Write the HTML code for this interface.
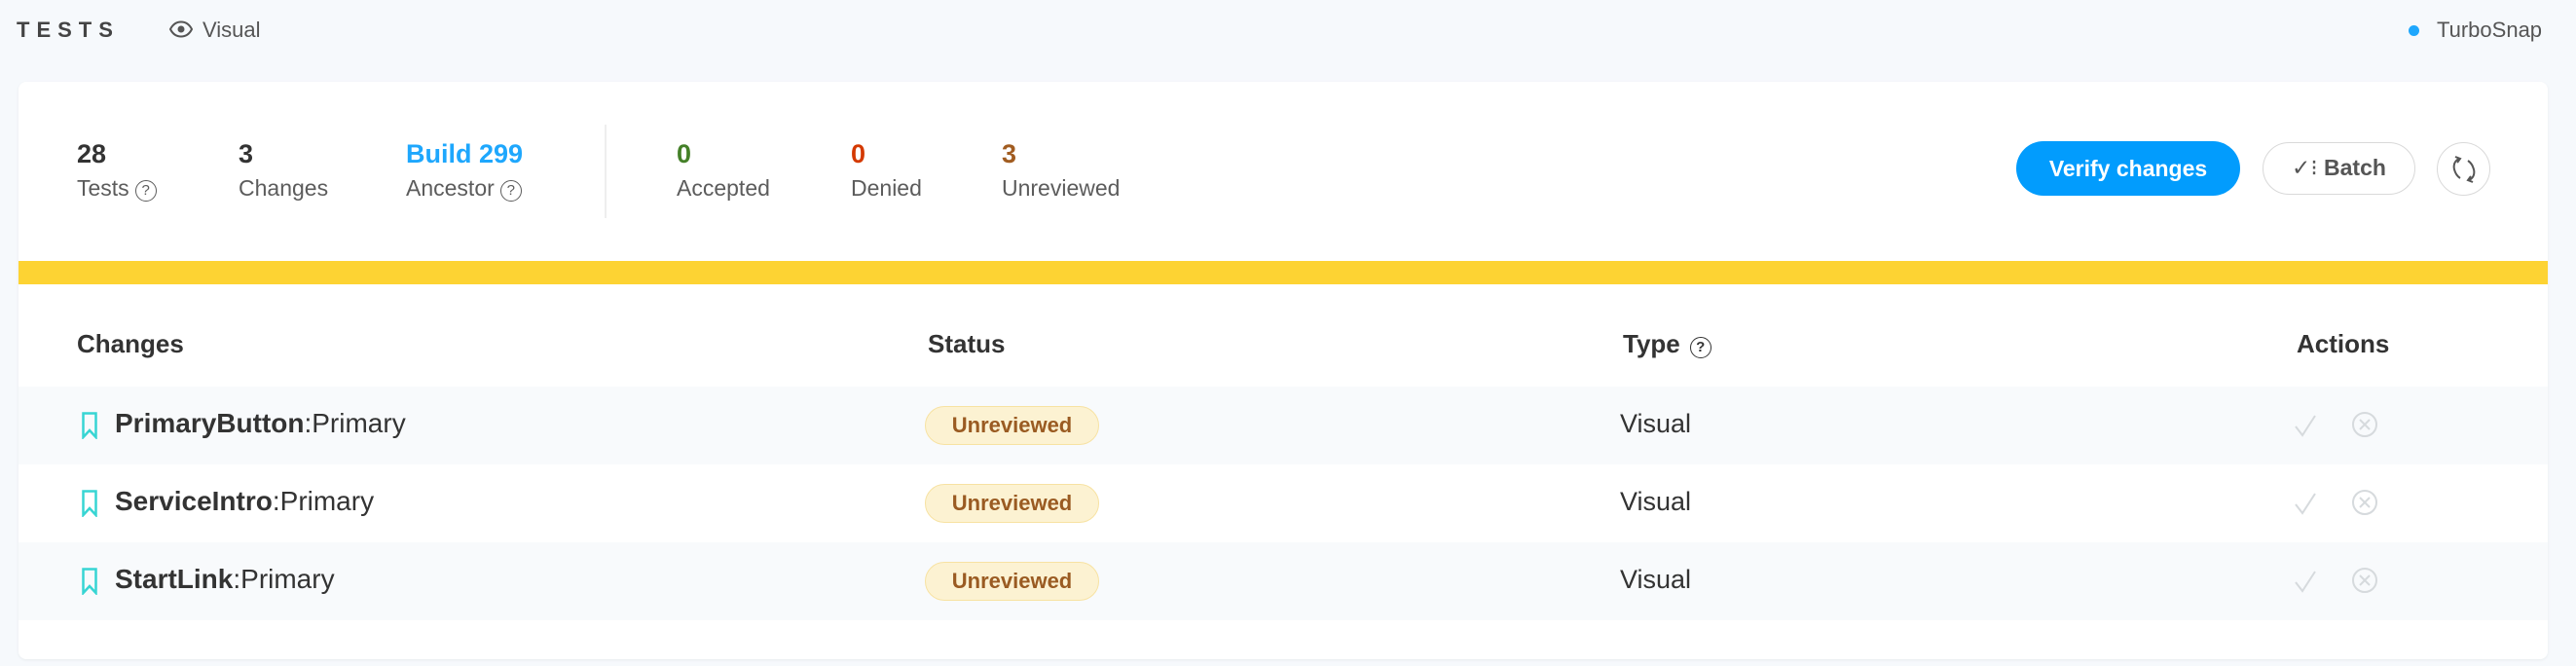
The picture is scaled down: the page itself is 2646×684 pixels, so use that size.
<!DOCTYPE html>
<html><head><meta charset="utf-8"><style>
*{box-sizing:border-box;margin:0;padding:0}
body{width:2646px;height:684px;background:#f6f9fc;font-family:"Liberation Sans",sans-serif;color:#333;position:relative;overflow:hidden}
.a{position:absolute;white-space:nowrap}
.card{position:absolute;left:19px;top:84px;width:2598px;height:593px;background:#fff;border-radius:8px;box-shadow:0 1px 3px rgba(0,0,0,.06)}
.num{font-size:27px;font-weight:bold;top:143px}
.lbl{font-size:23px;color:#5c5c5c;top:180px}
.q{display:inline-block;width:22px;height:22px;border:1.6px solid #5c5c5c;border-radius:50%;font-size:15px;text-align:center;line-height:19px;vertical-align:1px;margin-left:6px;color:#5c5c5c}
.th{font-size:26px;font-weight:bold;color:#333;top:338px}
.row{position:absolute;left:19px;width:2598px;height:80px}
.name{font-size:28px;left:118px}
.name b{font-weight:bold}
.badge{position:absolute;left:950px;width:179px;height:40px;border-radius:20px;background:#fcf2d2;border:1.5px solid #f7e2a2;color:#9a5b22;font-weight:bold;font-size:22px;text-align:center;line-height:37px}
.vis{font-size:27px;left:1664px}
</style></head><body>
<div class="a" style="left:17px;top:18px;font-size:22px;font-weight:bold;letter-spacing:7px;color:#444">TESTS</div>
<svg class="a" style="left:174px;top:21px" width="24" height="18" viewBox="0 0 24 18"><path d="M1 9C4 3 8 1.5 12 1.5S20 3 23 9C20 15 16 16.5 12 16.5S4 15 1 9Z" fill="none" stroke="#555" stroke-width="2"/><circle cx="12" cy="9" r="3.5" fill="#555"/></svg>
<div class="a" style="left:208px;top:18px;font-size:22px;color:#555">Visual</div>
<div class="a" style="left:2474px;top:26px;width:11px;height:11px;border-radius:50%;background:#1ea7fd"></div>
<div class="a" style="left:2503px;top:18px;font-size:22px;color:#555">TurboSnap</div>

<div class="card"></div>
<div class="a num" style="left:79px">28</div><div class="a lbl" style="left:79px">Tests<span class="q">?</span></div>
<div class="a num" style="left:245px">3</div><div class="a lbl" style="left:245px">Changes</div>
<div class="a num" style="left:417px;color:#1ea7fd">Build 299</div><div class="a lbl" style="left:417px">Ancestor<span class="q">?</span></div>
<div class="a" style="left:621px;top:128px;width:2px;height:96px;background:#eee"></div>
<div class="a num" style="left:695px;color:#448028">0</div><div class="a lbl" style="left:695px">Accepted</div>
<div class="a num" style="left:874px;color:#d43900">0</div><div class="a lbl" style="left:874px">Denied</div>
<div class="a num" style="left:1029px;color:#a15c20">3</div><div class="a lbl" style="left:1029px">Unreviewed</div>

<div class="a" style="left:2071px;top:145px;width:230px;height:56px;border-radius:28px;background:#029cfd;color:#fff;font-weight:bold;font-size:23px;text-align:center;line-height:56px">Verify changes</div>
<div class="a" style="left:2324px;top:146px;width:157px;height:54px;border-radius:27px;border:1.5px solid #d9d9d9;color:#555;font-weight:bold;font-size:23px;text-align:center;line-height:51px"><span style="font-weight:normal">✓⁝</span> Batch</div>
<div class="a" style="left:2503px;top:146px;width:55px;height:55px;border-radius:50%;border:1.5px solid #d9d9d9"></div>
<svg class="a" style="left:2517px;top:159px" width="28" height="30" viewBox="0 0 28 30"><path d="M9 4C4 6 3 11 4 15S7 22 10 24M19 26C24 24 25 19 24 15S21 8 18 6" fill="none" stroke="#555" stroke-width="2"/><path d="M5 2L10 4L7 8M23 28L18 26L21 22" fill="none" stroke="#555" stroke-width="2"/></svg>

<div class="a" style="left:19px;top:268px;width:2598px;height:24px;background:#fdd333"></div>

<div class="a th" style="left:79px">Changes</div>
<div class="a th" style="left:953px">Status</div>
<div class="a th" style="left:1667px">Type<span class="q" style="color:#333;border-color:#333;margin-left:10px">?</span></div>
<div class="a th" style="left:2359px">Actions</div>

<div class="row" style="top:397px;background:#f8fafc"></div>
<div class="row" style="top:557px;background:#f8fafc"></div>

<svg class="a" style="left:84px;top:423px" width="16" height="28" viewBox="0 0 16 28"><path d="M1.5 1.5H14.5V26L8 19L1.5 26Z" fill="none" stroke="#37d5d3" stroke-width="2.5"/></svg>
<svg class="a" style="left:84px;top:503px" width="16" height="28" viewBox="0 0 16 28"><path d="M1.5 1.5H14.5V26L8 19L1.5 26Z" fill="none" stroke="#37d5d3" stroke-width="2.5"/></svg>
<svg class="a" style="left:84px;top:583px" width="16" height="28" viewBox="0 0 16 28"><path d="M1.5 1.5H14.5V26L8 19L1.5 26Z" fill="none" stroke="#37d5d3" stroke-width="2.5"/></svg>

<div class="a name" style="top:419px"><b>PrimaryButton</b>:Primary</div>
<div class="a name" style="top:499px"><b>ServiceIntro</b>:Primary</div>
<div class="a name" style="top:579px"><b>StartLink</b>:Primary</div>

<div class="badge" style="top:417px">Unreviewed</div>
<div class="badge" style="top:497px">Unreviewed</div>
<div class="badge" style="top:577px">Unreviewed</div>

<div class="a vis" style="top:420px">Visual</div>
<div class="a vis" style="top:500px">Visual</div>
<div class="a vis" style="top:580px">Visual</div>

<svg class="a" style="left:2356px;top:422px" width="90" height="30" viewBox="0 0 90 30"><path d="M2 16L9 25L22 5" fill="none" stroke="#d6dadd" stroke-width="2"/><circle cx="73" cy="14" r="12" fill="none" stroke="#d6dadd" stroke-width="2"/><path d="M68 9L78 19M78 9L68 19" stroke="#d6dadd" stroke-width="2"/></svg>
<svg class="a" style="left:2356px;top:502px" width="90" height="30" viewBox="0 0 90 30"><path d="M2 16L9 25L22 5" fill="none" stroke="#d6dadd" stroke-width="2"/><circle cx="73" cy="14" r="12" fill="none" stroke="#d6dadd" stroke-width="2"/><path d="M68 9L78 19M78 9L68 19" stroke="#d6dadd" stroke-width="2"/></svg>
<svg class="a" style="left:2356px;top:582px" width="90" height="30" viewBox="0 0 90 30"><path d="M2 16L9 25L22 5" fill="none" stroke="#d6dadd" stroke-width="2"/><circle cx="73" cy="14" r="12" fill="none" stroke="#d6dadd" stroke-width="2"/><path d="M68 9L78 19M78 9L68 19" stroke="#d6dadd" stroke-width="2"/></svg>
</body></html>
